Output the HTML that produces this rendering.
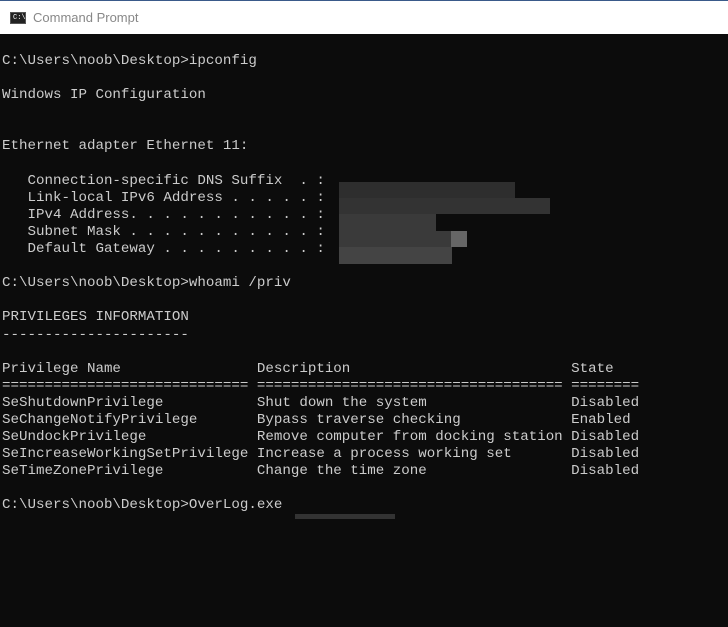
<!DOCTYPE html>
<html><head><style>
body{margin:0;width:728px;height:627px;background:#0c0c0c;overflow:hidden;position:relative;font-family:"Liberation Sans",sans-serif}
#tb{position:absolute;left:0;top:0;width:728px;height:34px;background:#fff;border-top:1px solid #3a5a8a;box-sizing:border-box}
#tb span{position:absolute;left:33px;top:9px;font-size:13px;color:#888}
#ic{position:absolute;left:10px;top:11px;width:16px;height:12px;background:#222;border:1px solid #555;box-sizing:border-box}
#ic i{position:absolute;left:2px;top:2px;font-size:7px;color:#fff;font-style:normal;font-family:"Liberation Mono",monospace;line-height:7px}
pre{position:absolute;left:2px;top:53px;margin:0;font-family:"Liberation Mono",monospace;font-size:14.17px;line-height:17.1px;color:#cccccc}
.b{position:absolute}
</style></head><body>
<div id="tb"><div id="ic"><i>C:\</i></div><span>Command Prompt</span></div>
<pre>C:\Users\noob\Desktop&gt;ipconfig

Windows IP Configuration


Ethernet adapter Ethernet 11:

   Connection-specific DNS Suffix  . :
   Link-local IPv6 Address . . . . . :
   IPv4 Address. . . . . . . . . . . :
   Subnet Mask . . . . . . . . . . . :
   Default Gateway . . . . . . . . . :

C:\Users\noob\Desktop&gt;whoami /priv

PRIVILEGES INFORMATION
----------------------

Privilege Name                Description                          State
============================= ==================================== ========
SeShutdownPrivilege           Shut down the system                 Disabled
SeChangeNotifyPrivilege       Bypass traverse checking             Enabled
SeUndockPrivilege             Remove computer from docking station Disabled
SeIncreaseWorkingSetPrivilege Increase a process working set       Disabled
SeTimeZonePrivilege           Change the time zone                 Disabled

C:\Users\noob\Desktop&gt;OverLog.exe</pre>
<div class="b" style="left:339px;top:182px;width:176px;height:16px;background:#2e2e2e"></div>
<div class="b" style="left:339px;top:198px;width:211px;height:16px;background:#333"></div>
<div class="b" style="left:339px;top:214px;width:97px;height:17px;background:#3a3a3a"></div>
<div class="b" style="left:339px;top:231px;width:128px;height:16px;background:#3a3a3a"></div>
<div class="b" style="left:451px;top:231px;width:16px;height:16px;background:#666"></div>
<div class="b" style="left:339px;top:247px;width:113px;height:17px;background:#444"></div>
<div class="b" style="left:295px;top:514px;width:100px;height:5px;background:#333"></div>
</body></html>
